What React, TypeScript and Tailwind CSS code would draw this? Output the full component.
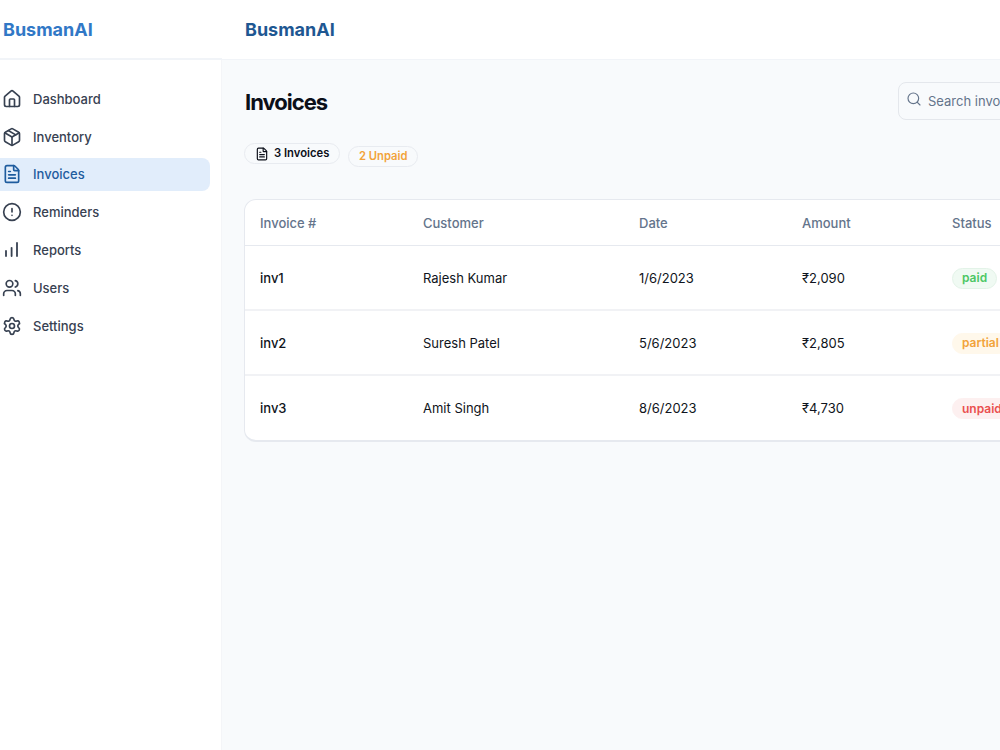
import React from "react";
import { House, Package, FileText, CircleAlert, Users, Settings, Search } from "lucide-react";

const ReportsIcon = () => (
  <svg width={20} height={20} viewBox="0 0 20 20" fill="none" stroke="currentColor" strokeWidth={1.8} strokeLinecap="round">
    <path d="M4 16v-5" />
    <path d="M9.6 16V7.8" />
    <path d="M15 16V3" />
  </svg>
);

const navItems = [
  { label: "Dashboard", icon: <House size={20} strokeWidth={2} /> },
  { label: "Inventory", icon: <Package size={20} strokeWidth={2} /> },
  { label: "Invoices", icon: <FileText size={20} strokeWidth={2} />, active: true },
  { label: "Reminders", icon: <CircleAlert size={20} strokeWidth={2} /> },
  { label: "Reports", icon: <ReportsIcon /> },
  { label: "Users", icon: <Users size={20} strokeWidth={2} /> },
  { label: "Settings", icon: <Settings size={20} strokeWidth={2} /> },
];

const rows = [
  { id: "inv1", customer: "Rajesh Kumar", date: "1/6/2023", amount: "₹2,090", status: "paid", badge: "bg-[#f0faf3] border-[#e3f3e8] text-[#4cc764]" },
  { id: "inv2", customer: "Suresh Patel", date: "5/6/2023", amount: "₹2,805", status: "partial", badge: "bg-[#fff8eb] border-[#fff8eb] text-[#f2a33a]" },
  { id: "inv3", customer: "Amit Singh", date: "8/6/2023", amount: "₹4,730", status: "unpaid", badge: "bg-[#fdf0f0] border-[#fdf0f0] text-[#ea4f4f]" },
];

const App = () => {
  return (
    <div className="flex flex-col w-[1000px] h-[750px] overflow-hidden bg-white font-['Inter',sans-serif]">
      <div className="flex flex-row h-[60px] shrink-0 bg-white">
        <div className="flex items-center w-[222px] shrink-0 pl-[3px] border-b-2 border-[#f1f4f8]">
          <span className="text-[18px] font-bold text-[#3178c6]">BusmanAI</span>
        </div>
        <div className="flex items-center flex-1 pl-[23px] border-b border-[#f1f4f8]">
          <span className="text-[18px] font-bold text-[#1e5792]">BusmanAI</span>
        </div>
      </div>
      <div className="flex flex-row flex-1 min-h-0">
        <div className="flex flex-col gap-1 w-[222px] shrink-0 pt-[22px] pr-[11px] bg-white border-r border-[#f4f5f8]">
          {navItems.map((item) => (
            <div
              key={item.label}
              className={
                item.active
                  ? "flex flex-row items-center gap-[11px] h-[33.8px] pl-[2px] rounded-r-lg bg-[#e1edfb] text-[#1e5c9e]"
                  : "flex flex-row items-center gap-[11px] h-[33.8px] pl-[2px] text-[#374151]"
              }
            >
              {item.icon}
              <span className="text-[13px] leading-5 font-medium">{item.label}</span>
            </div>
          ))}
        </div>
        <div className="flex-1 min-w-0 pl-[22px] pt-[22px] bg-[#f8fafc]">
          <div className="flex flex-row items-center justify-between w-[1000px] h-[38px]">
            <h1 className="pt-[2px] pl-[1px] text-[22px] leading-8 font-bold tracking-[-1px] text-[#0b0f19]">Invoices</h1>
            <div className="flex flex-row items-center gap-[6px] w-[346px] h-[38px] pl-[7px] rounded-lg border border-[#e4e7ec] bg-[#f8fafc]">
              <Search size={16} strokeWidth={1.75} className="-mt-[4px] text-[#64748b]" />
              <span className="pt-[2px] text-[13px] text-[#64748b]">Search invoices...</span>
            </div>
          </div>
          <div className="flex flex-row items-start gap-2 mt-[23px]">
            <div className="flex flex-row items-center gap-[5px] h-[21px] px-[10px] rounded-full border border-[#e8ebf0] bg-[#f8fafc]">
              <FileText size={14} strokeWidth={2} className="text-[#0b0f19]" />
              <span className="text-[11.25px] font-semibold text-[#0b0f19]">3 Invoices</span>
            </div>
            <div className="flex flex-row items-center h-[21px] px-[9.5px] mt-[3px] rounded-full border border-[#e8ebf0] bg-[#f8fafc]">
              <span className="text-[11.25px] font-semibold text-[#f2a33a]">2 Unpaid</span>
            </div>
          </div>
          <div className="w-[1000px] mt-[32px] rounded-xl border border-[#e6e9ef] border-b-2 bg-white overflow-hidden">
            <div className="flex flex-row items-center h-[46px] pl-[15px] pt-[3px] border-b border-[#e6e9ef] text-[13px] font-medium text-[#64748b]">
              <div className="w-[163px]">Invoice #</div>
              <div className="w-[216px]">Customer</div>
              <div className="w-[163px]">Date</div>
              <div className="w-[150px]">Amount</div>
              <div>Status</div>
            </div>
            {rows.map((row, i) => {
              const cell = i < 2 ? "pt-[2px]" : "";
              return (
                <div
                  key={row.id}
                  className={
                    i < 2
                      ? "flex flex-row items-center h-[65px] pl-[15px] pt-[1px] border-b-2 border-[#f1f2f5] text-[13px] text-[#0f1420]"
                      : "flex flex-row items-center h-[64px] pl-[15px] pt-[1px] text-[13px] text-[#0f1420]"
                  }
                >
                  <div className={"w-[163px] font-medium " + cell}>{row.id}</div>
                  <div className={"w-[216px] " + cell}>{row.customer}</div>
                  <div className={"w-[163px] " + cell}>{row.date}</div>
                  <div className={"w-[150px] " + cell}>{row.amount}</div>
                  <div className={"flex items-center h-[21px] px-[9px] rounded-full border text-[12px] font-semibold " + row.badge}>
                    {row.status}
                  </div>
                </div>
              );
            })}
          </div>
        </div>
      </div>
    </div>
  );
};

export default App;
